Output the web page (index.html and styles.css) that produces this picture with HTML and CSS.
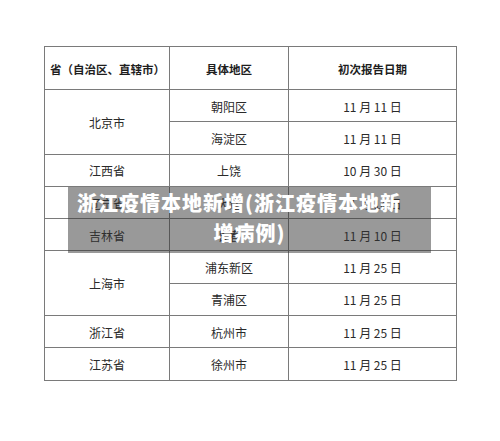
FILE: index.html
```html
<!DOCTYPE html>
<html lang="zh-CN">
<head>
<meta charset="utf-8">
<link rel="stylesheet" href="styles.css">
</head>
<body>
<div class="page">
  <table class="cases">
    <colgroup>
      <col class="c1"><col class="c2"><col class="c3">
    </colgroup>
    <thead>
      <tr class="head">
        <th class="left">省（自治区、直辖市）</th>
        <th>具体地区</th>
        <th>初次报告日期</th>
      </tr>
    </thead>
    <tbody>
      <tr><td rowspan="2">北京市</td><td>朝阳区</td><td>11 月 11 日</td></tr>
      <tr><td>海淀区</td><td>11 月 11 日</td></tr>
      <tr><td>江西省</td><td>上饶</td><td>10 月 30 日</td></tr>
      <tr><td>辽宁省</td><td>大连</td><td>11 月 14 日</td></tr>
      <tr><td>吉林省</td><td>长春</td><td>11 月 10 日</td></tr>
      <tr><td rowspan="2">上海市</td><td>浦东新区</td><td>11 月 25 日</td></tr>
      <tr><td>青浦区</td><td>11 月 25 日</td></tr>
      <tr><td>浙江省</td><td>杭州市</td><td>11 月 25 日</td></tr>
      <tr><td>江苏省</td><td>徐州市</td><td>11 月 25 日</td></tr>
    </tbody>
  </table>
  <div class="banner">
    <div class="line one">浙江疫情本地新增(浙江疫情本地新</div>
    <div class="line">增病例)</div>
  </div>
</div>
</body>
</html>
```
FILE: styles.css
```css
html, body {
  margin: 0;
  padding: 0;
  background: #ffffff;
}
.page {
  position: relative;
  width: 500px;
  height: 441px;
  padding: 46px 0 0 44px;
  box-sizing: border-box;
  font-family: "Noto Sans CJK SC", "Noto Sans", sans-serif;
}
.cases {
  border-collapse: collapse;
  table-layout: fixed;
  width: 412px;
  color: #2a2a2a;
  font-size: 12px;
}
.c1 { width: 125px; }
.c2 { width: 119px; }
.c3 { width: 168px; }
.cases th, .cases td {
  border: 1px solid #7a7a7a;
  text-align: center;
  vertical-align: middle;
  padding: 2px 0 0 0;
  line-height: 16px;
}
.cases th {
  font-weight: 700;
  font-size: 11.5px;
  color: #1e1e1e;
}
.cases th.left {
  text-align: left;
  padding-left: 5px;
}
.head { height: 43px; }
.cases tbody tr { height: 32.3px; }
.banner {
  position: absolute;
  left: 68px;
  top: 187px;
  width: 363px;
  height: 66px;
  padding-top: 1px;
  box-sizing: border-box;
  background: rgba(51, 51, 51, 0.5);
  color: #ffffff;
  font-size: 20px;
  font-weight: 900;
  letter-spacing: 1px;
  line-height: 30px;
  text-align: center;
}
.line.one {
  padding-right: 21px;
}
```
